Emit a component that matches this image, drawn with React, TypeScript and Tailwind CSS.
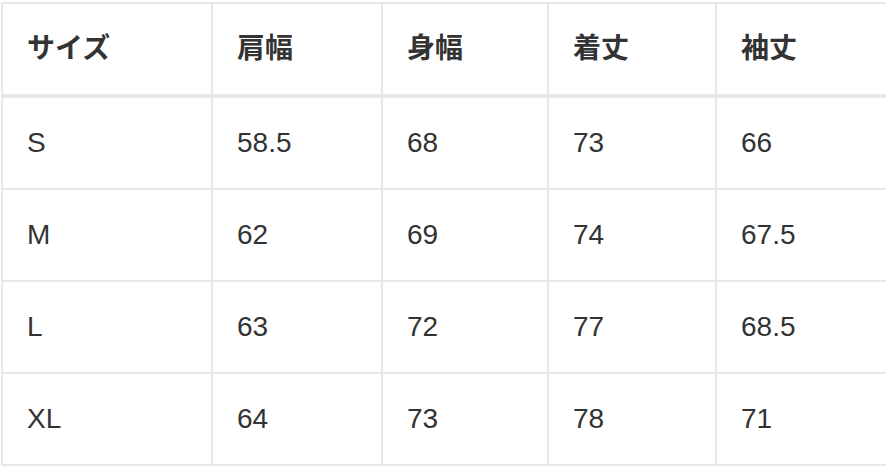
import React from "react";

const headers = ["サイズ", "肩幅", "身幅", "着丈", "袖丈"];
const rows = [
  ["S", "58.5", "68", "73", "66"],
  ["M", "62", "69", "74", "67.5"],
  ["L", "63", "72", "77", "68.5"],
  ["XL", "64", "73", "78", "71"],
];

export default function App() {
  return (
    <div className="w-[886px] h-[466px] overflow-hidden bg-white pl-px pt-[2px]">
      <div
        className="grid grid-cols-[210px_170px_166px_168px_1fr] text-[#333333]"
        style={{ fontFamily: '"Liberation Sans", "Noto Sans CJK JP", sans-serif' }}
      >
        {headers.map((h) => (
          <div
            key={h}
            className="h-[96px] border-l-2 border-t-2 border-b-4 border-[#e8e8e8] pl-6 flex items-center text-[28px] font-bold"
          >
            {h}
          </div>
        ))}
        {rows.map((r, i) =>
          r.map((c, j) => (
            <div
              key={`${i}-${j}`}
              className="h-[92px] border-l-2 border-b-2 border-[#e8e8e8] pl-6 flex items-center text-[28px]"
            >
              {c}
            </div>
          ))
        )}
      </div>
    </div>
  );
}
